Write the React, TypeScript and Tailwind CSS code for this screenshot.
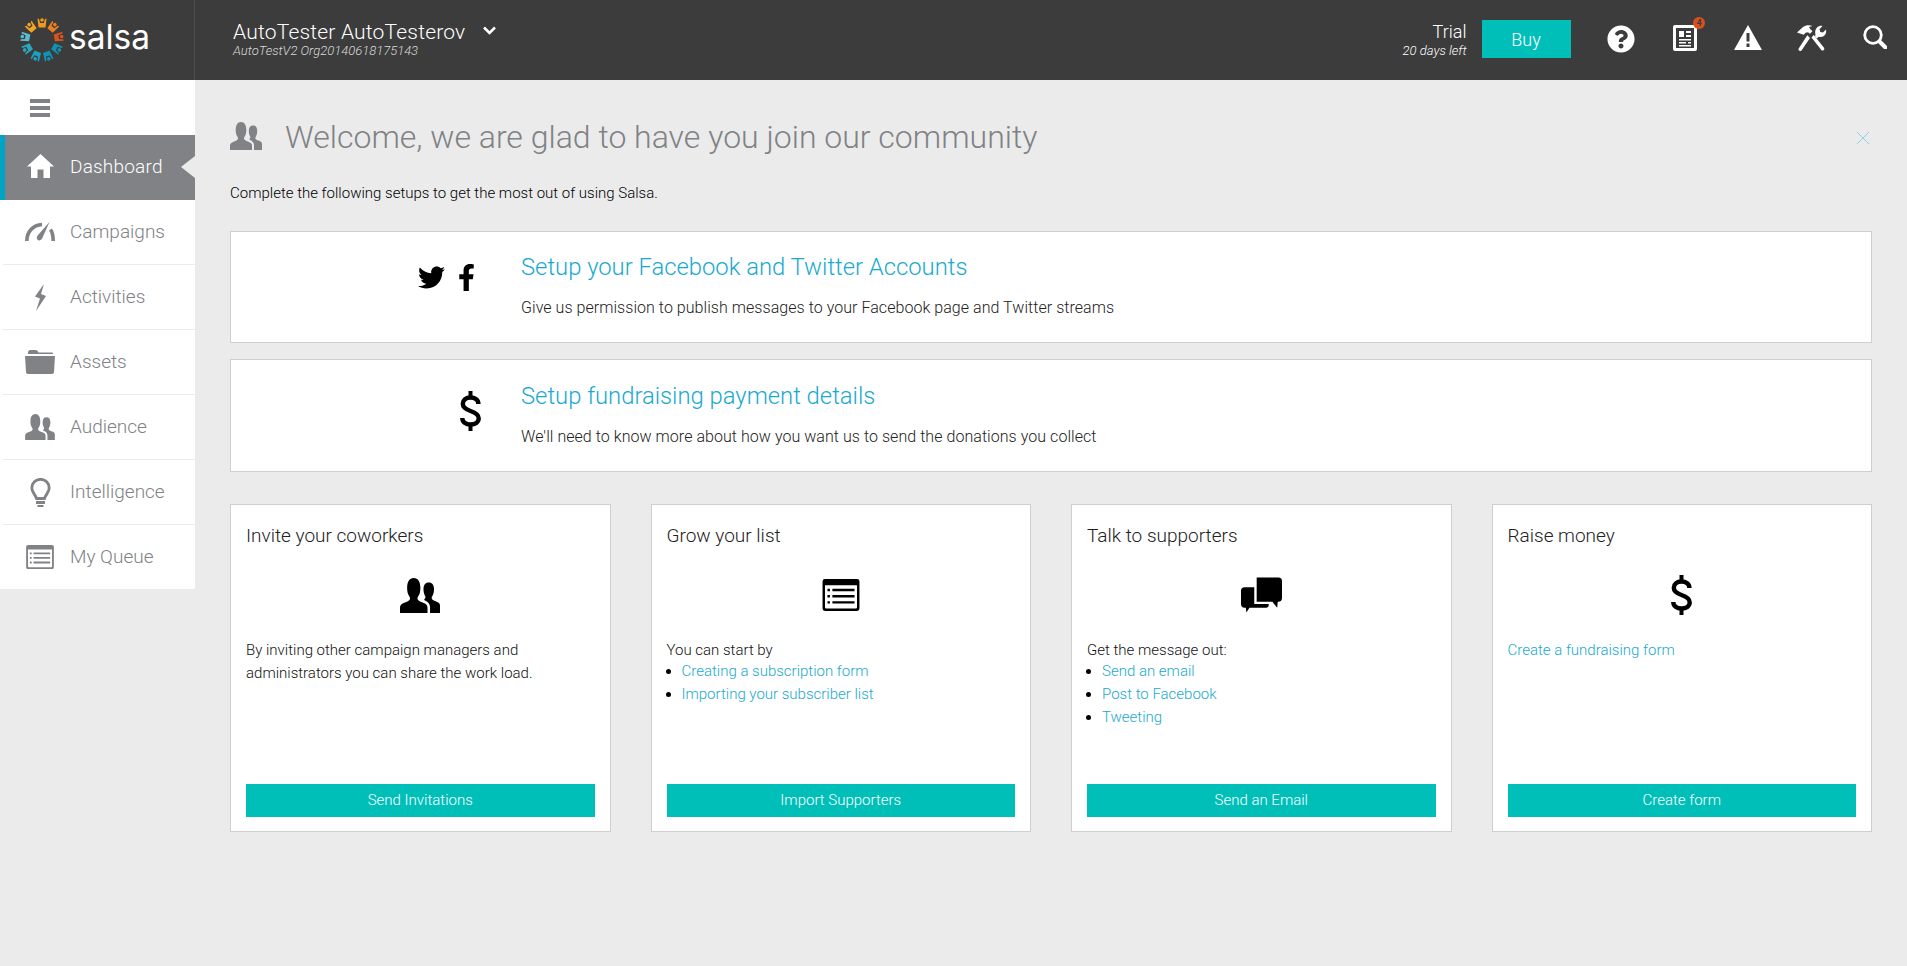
import { FaFacebookF, FaQuestionCircle, FaTwitter } from "react-icons/fa";

type IconProps = { className?: string };

function PeopleIcon({ className }: IconProps) {
  return (
    <svg className={className} viewBox="0 0 32 28" fill="currentColor">
      <path d="M0 28v-4.500c0-2 1.500-3 3.500-3.800 2-.8 4-1.500 4.500-3 .2-.8-.2-1.500-.8-2.500C6.300 13 5.700 11 5.700 8 5.700 3 7.500 0 11 0s5.300 3 5.300 8c0 3-.6 5-1.500 6.200-.6 1-1 1.700-.8 2.500.5 1.500 2.500 2.200 4.500 3 2 .8 3.500 1.800 3.500 3.800V28z" />
      <path d="M24 28v-5c0-2.500-1.800-4-4-5-.6-.3-.8-.5-.6-.9.3-.5 1-.9 1-1.800 0-.6-.5-1.200-.8-2-.5-1.100-.8-2.500-.8-4.300 0-3.500 1.400-5.500 4.200-5.500s4.200 2 4.200 5.500c0 2.300-.5 4-1.200 5.200-.5.900-.8 1.500-.6 2.200.3 1.100 1.700 1.600 3.100 2.200 1.700.7 3.500 1.400 3.500 3.200V28z" />
    </svg>
  );
}

function DollarIcon({ className }: IconProps) {
  return (
    <svg className={className} viewBox="0 0 21 40" fill="none" stroke="currentColor">
      <path d="M18.400 13c0-4-3.300-6.500-7.900-6.500S2.800 9 2.800 12.800c0 4.400 3.800 5.900 7.700 7.200s8.200 3 8.200 7.300c0 3.900-3.400 6.200-8.200 6.200S2.300 31 2.300 27" strokeWidth="4.400" />
      <path d="M10.500 0v6M10.500 34v6" strokeWidth="4" />
    </svg>
  );
}

function ListIcon({ className }: IconProps) {
  return (
    <svg className={className} viewBox="0 0 30 26" fill="currentColor" fillRule="evenodd">
      <path d="M2 0h26a2 2 0 0 1 2 2v22a2 2 0 0 1-2 2H2a2 2 0 0 1-2-2V2a2 2 0 0 1 2-2zM2 5v18a1 1 0 0 0 1 1h24a1 1 0 0 0 1-1V5zM4 8h2v2H4zM8 8h18v2H8zM4 13h2v2H4zM8 13h18v2H8zM4 18h2v2H4zM8 18h18v2H8z" />
    </svg>
  );
}

function HomeIcon({ className }: IconProps) {
  return (
    <svg className={className} viewBox="0 0 27 24" fill="currentColor">
      <path d="M13.500 0 27 12.500h-4V24h-6.500v-8.500h-6V24H4V12.500H0z" />
    </svg>
  );
}

function GaugeIcon({ className }: IconProps) {
  return (
    <svg className={className} viewBox="0 0 30 20" fill="currentColor">
      <path d="M1.800 19C1.800 10 8 3 17 2.500M25.500 7.500c2 3 2.700 7 2.700 11.500" fill="none" stroke="currentColor" strokeWidth="3.600" />
      <path d="M24.500 0 18 14.500c-.8 2.800-2.600 4.500-4.600 3.700-2-.8-2-3-.6-5z" />
    </svg>
  );
}

function BoltIcon({ className }: IconProps) {
  return (
    <svg className={className} viewBox="0 0 13 27" fill="currentColor">
      <path d="M10 0 1 12.500l5 2L2 27l10-15-5-2z" />
    </svg>
  );
}

function FolderIcon({ className }: IconProps) {
  return (
    <svg className={className} viewBox="0 0 30 24" fill="currentColor">
      <path d="M3 2.500C3 1 4 0 5.500 0h5c1.300 0 2 .7 3 2.500H27a1 1 0 0 1 1 1V4H3z" />
      <path d="M0 6h30l-1 16c0 1.200-.8 2-2 2H3c-1.200 0-2-.8-2-2z" />
    </svg>
  );
}

function BulbIcon({ className }: IconProps) {
  return (
    <svg className={className} viewBox="0 0 21 29" fill="currentColor">
      <path d="M6.500 20.500C5.500 16.500 1.800 14.500 1.800 10a8.700 8.700 0 0 1 17.400 0c0 4.500-3.700 6.500-4.700 10.500z" fill="none" stroke="currentColor" strokeWidth="2.800" />
      <path d="M6 23h9v3H6zM7.500 27h6v2h-6z" />
    </svg>
  );
}

function ChatIcon({ className }: IconProps) {
  return (
    <svg className={className} viewBox="0 0 34 29" fill="currentColor">
      <path d="M13 0h18a3 3 0 0 1 3 3v14a3 3 0 0 1-3 3h-.5l-.5 5-4-5H13z" />
      <path d="M3 8h8v14h12v1a2 2 0 0 1-2 2H7l-2.500 4-.5-4H3a3 3 0 0 1-3-3V11a3 3 0 0 1 3-3z" />
    </svg>
  );
}

function NewsIcon({ className }: IconProps) {
  return (
    <svg className={className} viewBox="0 0 24 26" fill="currentColor" fillRule="evenodd">
      <path d="M2 0h20a2 2 0 0 1 2 2v22a2 2 0 0 1-2 2H2a2 2 0 0 1-2-2V2a2 2 0 0 1 2-2zM3 3v20h18V3zM6 6h5v6H6zM13 6h5v2h-5zM13 10h5v2h-5zM6 14h12v1.500H6zM6 17h7v1.500H6zM15 17h3v1.500h-3zM6 20h12v1.500H6z" />
    </svg>
  );
}

function WarningIcon({ className }: IconProps) {
  return (
    <svg className={className} viewBox="0 0 28 25" fill="currentColor" fillRule="evenodd">
      <path d="M14 0 28 25H0zM12.500 8v8.500h3V8zM12.500 18.500V22h3v-3.500z" />
    </svg>
  );
}

function ToolsIcon({ className }: IconProps) {
  return (
    <svg className={className} viewBox="0 0 30 26" fill="currentColor">
      <path d="M0 7.500 6 2c3-2.200 6.500-2.300 9.500-1l-3.500 1 1.500 2.500 2 1.500-2.500 2.800-2-1.500-2.500.4-1.800 2z" />
      <path d="M10.300 10.300 13 13 4.500 25.500c-.8.700-1.800.7-2.500 0-.7-.7-.7-1.700 0-2.500z" />
      <path d="m14.500 12.500 2.300-2.500 10 12.500c.7.800.7 1.800 0 2.500-.8.700-1.800.7-2.500 0z" />
      <path d="M18.500 9.500C17.500 6 19 2 22.500 1c1-.3 2-.3 3 0l-3 3.200.8 2.700 2.700.7L29 4.500c.6 2.800-.3 5.500-2.500 6.800-1.700 1-3.500 1-5 .4l-1.500 1.800-2-2z" />
    </svg>
  );
}

function SearchIcon({ className }: IconProps) {
  return (
    <svg className={className} viewBox="0 0 24 24" fill="none" stroke="currentColor">
      <circle cx="10" cy="10" r="8.300" strokeWidth="2.800" />
      <path d="m16.500 16.500 6 6" strokeWidth="4" strokeLinecap="round" />
    </svg>
  );
}

function LogoMark() {
  const colors = ["#f09a20", "#ee7f1f", "#d9531e", "#0f93b4", "#0f93b4", "#1aa0c0", "#2aa8c0", "#5cbccb", "#f2a61f"];
  return (
    <svg className="w-[46px] h-[46px] shrink-0" viewBox="-23 -23 46 46">
      {colors.map((color, i) => (
        <g key={i} transform={`rotate(${i * 40})`} fill={color}>
          <path d="M-4.500 -21.500-2.900 -21-1.900 -17 1.900 -17 2.900 -21 4.500 -21.500 3.500 -12.500-3.500 -12.500z" />
          <circle cx="0" cy="-20" r="1.800" />
        </g>
      ))}
    </svg>
  );
}

const navItems = [
  { label: "Campaigns", icon: <GaugeIcon className="w-[30px] h-[20px]" /> },
  { label: "Activities", icon: <BoltIcon className="w-[13px] h-[27px]" /> },
  { label: "Assets", icon: <FolderIcon className="w-[30px] h-[24px]" /> },
  { label: "Audience", icon: <PeopleIcon className="w-[30px] h-[26px]" /> },
  { label: "Intelligence", icon: <BulbIcon className="w-[21px] h-[29px]" /> },
  { label: "My Queue", icon: <ListIcon className="w-[30px] h-[24px]" /> },
];

function Sidebar() {
  return (
    <aside className="w-[195px] shrink-0 self-start bg-white">
      <div className="h-[55px] flex items-center pl-[30px]">
        <div className="w-[20px] flex flex-col gap-[3px]">
          <span className="h-[4px] bg-[#808285]" />
          <span className="h-[4px] bg-[#808285]" />
          <span className="h-[4px] bg-[#808285]" />
        </div>
      </div>
      <div className="relative h-[65px] bg-[#808285] border-l-[5px] border-[#00a4c4] flex items-center text-white">
        <div className="w-[65px] pl-[22px] shrink-0 pb-[3px]">
          <HomeIcon className="w-[27px] h-[24px]" />
        </div>
        <span className="text-[19px] font-light tracking-[0.2px] pb-[1px]">Dashboard</span>
        <span className="absolute right-0 top-[21px] w-0 h-0 border-y-[11px] border-y-transparent border-r-[14px] border-r-[#ebebeb]" />
      </div>
      {navItems.map((item) => (
        <div key={item.label} className="h-[65px] last:h-[64px] ml-[3px] border-b border-[#ebebeb] last:border-b-0 flex items-center text-[#808285]">
          <div className="w-[67px] pl-[22px] shrink-0 flex">
            <div className="w-[30px] flex justify-center">{item.icon}</div>
          </div>
          <span className="text-[19px] font-light">{item.label}</span>
        </div>
      ))}
    </aside>
  );
}

function Header() {
  return (
    <header className="h-[80px] bg-[#3c3c3c] flex items-center text-white">
      <div className="w-[195px] h-full shrink-0 border-r border-[#4d4d4d] flex items-center pl-[19px] gap-[4px]">
        <LogoMark />
        <span className="text-[33.500px] pb-[5px] [font-family:Inter,sans-serif]">salsa</span>
      </div>
      <div className="pl-[38px] flex-1">
        <div className="flex items-center h-[22px]">
          <span className="text-[21px] font-light tracking-[0.2px]">AutoTester AutoTesterov</span>
          <svg className="w-[13px] h-[9px] ml-[18px] mb-[5px]" viewBox="0 0 13 9" fill="none" stroke="currentColor" strokeWidth="2.500">
            <path d="m1 1.500 5.500 5.500L12 1.500" />
          </svg>
        </div>
        <div className="text-[13px] leading-[14px] font-light italic text-[#d8d8d8]">AutoTestV2 Org20140618175143</div>
      </div>
      <div className="text-right mr-[15px]">
        <div className="text-[18px] leading-[22px] font-light">Trial</div>
        <div className="text-[13px] leading-[16px] font-light italic">20 days left</div>
      </div>
      <button className="w-[89px] h-[38px] mb-[2px] bg-[#00bfb8] text-[18px] font-light">Buy</button>
      <div className="flex ml-[19px] mb-[2px]">
        <div className="w-[63.500px] flex justify-center">
          <FaQuestionCircle className="w-[28px] h-[28px]" />
        </div>
        <div className="w-[63.500px] flex justify-center relative">
          <NewsIcon className="w-[24px] h-[26px]" />
          <span className="absolute left-[40px] -top-[8px] w-[12px] h-[12px] rounded-full bg-[#d9501e] text-[#3c3c3c] text-[9px] leading-[12px] text-center font-bold">4</span>
        </div>
        <div className="w-[63.500px] flex justify-center">
          <WarningIcon className="w-[28px] h-[25px]" />
        </div>
        <div className="w-[63.500px] flex justify-center">
          <ToolsIcon className="w-[30px] h-[26px]" />
        </div>
        <div className="w-[63.500px] flex justify-center">
          <SearchIcon className="w-[24px] h-[24px]" />
        </div>
      </div>
    </header>
  );
}

function SetupRow({ icon, title, text, boxClass, bodyClass }: { icon: React.ReactNode; title: string; text: string; boxClass: string; bodyClass: string }) {
  return (
    <div className={`flex bg-white border border-[#cfcfcf] ${boxClass}`}>
      <div className="w-[250px] shrink-0 flex justify-end items-start pt-[31px]">{icon}</div>
      <div className="pl-[40px]">
        <div className="text-[23.800px] leading-[30px] font-light text-[#19a9d0]">{title}</div>
        <div className={`text-[16px] leading-[22px] tracking-[0.05px] font-light text-[#222] ${bodyClass}`}>{text}</div>
      </div>
    </div>
  );
}

function Card({ title, icon, button, children }: { title: string; icon: React.ReactNode; button: string; children: React.ReactNode }) {
  return (
    <div className="h-[328px] bg-white border border-[#cfcfcf] px-[15px] pt-[18px] pb-[14px] flex flex-col">
      <div className="text-[19px] leading-[26px] font-light text-[#222]">{title}</div>
      <div className="h-[44px] mt-[24px] flex justify-center items-center">{icon}</div>
      <div className="mt-[22px] flex-1 text-[15px] leading-[23px] font-light text-[#111]">{children}</div>
      <button className="h-[33px] bg-[#00bfb8] text-white text-[15px] font-light">{button}</button>
    </div>
  );
}

function LinkList({ items }: { items: string[] }) {
  return (
    <ul className="list-disc pl-[15px] -mt-[2px] marker:text-black">
      {items.map((item) => (
        <li key={item} className="text-[#19a9d0]">{item}</li>
      ))}
    </ul>
  );
}

export default function App() {
  return (
    <div className="min-h-[966px] bg-[#ebebeb] [font-family:Roboto,sans-serif]">
      <Header />
      <div className="flex">
        <Sidebar />
        <main className="flex-1 pl-[35px] pr-[35px]">
          <div className="flex items-center pt-[22px] h-[92px] relative">
            <PeopleIcon className="w-[32px] h-[28px] text-[#808285] mb-[3px]" />
            <h1 className="ml-[23px] text-[32px] leading-[40px] font-light text-[#808285]">Welcome, we are glad to have you join our community</h1>
            <svg className="absolute right-[3px] top-[52px] w-[12px] h-[12px] text-[#8fd2e4]" viewBox="0 0 12 12" fill="none" stroke="currentColor">
              <path d="m0 0 12 12M12 0 0 12" />
            </svg>
          </div>
          <p className="mt-[11px] text-[15px] leading-[20px] font-light text-black">Complete the following setups to get the most out of using Salsa.</p>
          <div className="mt-[28px] flex flex-col gap-[16px]">
            <SetupRow
              boxClass="h-[112px] pt-[20px]"
              bodyClass="mt-[15px]"
              title="Setup your Facebook and Twitter Accounts"
              text="Give us permission to publish messages to your Facebook page and Twitter streams"
              icon={
                <div className="flex items-center gap-[13px] mr-[6px] -mt-[19px] text-black">
                  <FaTwitter className="w-[27px] h-[27px]" />
                  <FaFacebookF className="w-[17px] h-[27px]" />
                </div>
              }
            />
            <SetupRow
              boxClass="h-[113px] pt-[21px]"
              bodyClass="mt-[15px]"
              title="Setup fundraising payment details"
              text="We'll need to know more about how you want us to send the donations you collect"
              icon={<DollarIcon className="w-[21px] h-[40px] text-black -mt-[21px]" />}
            />
          </div>
          <div className="mt-[32px] grid grid-cols-4 gap-[40px]">
            <Card title="Invite your coworkers" button="Send Invitations" icon={<PeopleIcon className="w-[40px] h-[35px] text-black" />}>
              By inviting other campaign managers and administrators you can share the work load.
            </Card>
            <Card title="Grow your list" button="Import Supporters" icon={<ListIcon className="w-[40px] h-[32px] text-black" />}>
              You can start by
              <LinkList items={["Creating a subscription form", "Importing your subscriber list"]} />
            </Card>
            <Card title="Talk to supporters" button="Send an Email" icon={<ChatIcon className="w-[41px] h-[36px] text-black" />}>
              Get the message out:
              <LinkList items={["Send an email", "Post to Facebook", "Tweeting"]} />
            </Card>
            <Card title="Raise money" button="Create form" icon={<DollarIcon className="w-[21px] h-[40px] text-black" />}>
              <span className="text-[#19a9d0]">Create a fundraising form</span>
            </Card>
          </div>
        </main>
      </div>
    </div>
  );
}
